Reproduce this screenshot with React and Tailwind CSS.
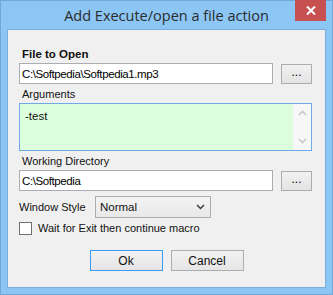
import React from "react";

function Field({ value }) {
  return (
    <div className="flex items-center gap-[8px]">
      <div className="w-[254px] h-[21px] border border-[#abadb3] bg-white flex items-center px-[2px] text-black text-[11.5px] tracking-[-0.4px]">
        {value}
      </div>
      <button className="w-[31px] h-[20px] border border-[#adadad] bg-gradient-to-b from-[#f2f2f2] to-[#e3e3e3] text-[12px] leading-[12px] pb-[4px] text-black">
        ...
      </button>
    </div>
  );
}

function App() {
  return (
    <div
      className="w-[333px] h-[295px] bg-[#8cc6f5] border border-[#72a8d8] flex flex-col"
      style={{ fontFamily: '"Liberation Sans", Arial, sans-serif' }}
    >
      <div className="relative h-[28px] flex items-center justify-center">
        <span
          className="text-[14.5px] text-[#2b2b2b] pt-[1px]"
          style={{ fontFamily: '"Open Sans", "Liberation Sans", sans-serif' }}
        >
          Add Execute/open a file action
        </span>
        <div className="absolute right-[6px] top-[-1px] w-[31px] h-[21px] bg-[#c75050] flex items-center justify-center">
          <svg width="10" height="9" viewBox="0 0 10 9">
            <path d="M1 0.5 L9 8.5 M9 0.5 L1 8.5" stroke="#fff" strokeWidth="2" />
          </svg>
        </div>
      </div>

      <div className="ml-[6px] w-[319px] h-[259px] border border-[#7aaee0] bg-[#f0f0f0] flex flex-col pl-[11px] text-[11px] leading-[14px] text-[#111]">
        <div className="mt-[17px] font-bold pl-[3px] text-[11.5px]">File to Open</div>
        <div className="mt-[2px]">
          <Field value="C:\Softpedia\Softpedia1.mp3" />
        </div>

        <div className="mt-[3px] pl-[3px]">Arguments</div>
        <div className="mt-[2px] w-[293px] h-[48px] border border-[#6fa9e8] bg-[#ddfedd] flex">
          <div className="flex-1 pl-[5px] pt-[5px] text-[11.5px]">-test</div>
          <div className="w-[18px] bg-[#f7f7f7] flex flex-col items-center justify-between py-[6px]">
            <svg width="9" height="6" viewBox="0 0 9 6">
              <path d="M1 5 L4.5 1.5 L8 5" stroke="#c8c8c8" strokeWidth="1.6" fill="none" />
            </svg>
            <svg width="9" height="6" viewBox="0 0 9 6">
              <path d="M1 1 L4.5 4.5 L8 1" stroke="#c8c8c8" strokeWidth="1.6" fill="none" />
            </svg>
          </div>
        </div>

        <div className="mt-[3px] pl-[3px]">Working Directory</div>
        <div className="mt-[2px]">
          <Field value="C:\Softpedia" />
        </div>

        <div className="mt-[5px] flex items-center">
          <span className="w-[76px]">Window Style</span>
          <div className="w-[116px] h-[22px] border border-[#acacac] bg-gradient-to-b from-[#f4f4f4] to-[#e8e8e8] flex items-center justify-between pl-[4px] pr-[5px] text-[11.5px]">
            <span>Normal</span>
            <svg width="9" height="6" viewBox="0 0 9 6">
              <path d="M1 1 L4.5 4.5 L8 1" stroke="#3c3c3c" strokeWidth="1.5" fill="none" />
            </svg>
          </div>
        </div>

        <div className="mt-[3px] flex items-center gap-[6px]">
          <div className="w-[13px] h-[13px] border border-[#707070] bg-white" />
          <span>Wait for Exit then continue macro</span>
        </div>

        <div className="mt-[15px] flex justify-center gap-[8px] pr-[11px]">
          <button className="w-[73px] h-[21px] border border-[#3c9af0] bg-gradient-to-b from-[#f2f2f2] to-[#e5e5e5] text-[12px]">
            Ok
          </button>
          <button className="w-[73px] h-[21px] border border-[#adadad] bg-gradient-to-b from-[#f2f2f2] to-[#e5e5e5] text-[12px]">
            Cancel
          </button>
        </div>
      </div>
    </div>
  );
}

export default App;
